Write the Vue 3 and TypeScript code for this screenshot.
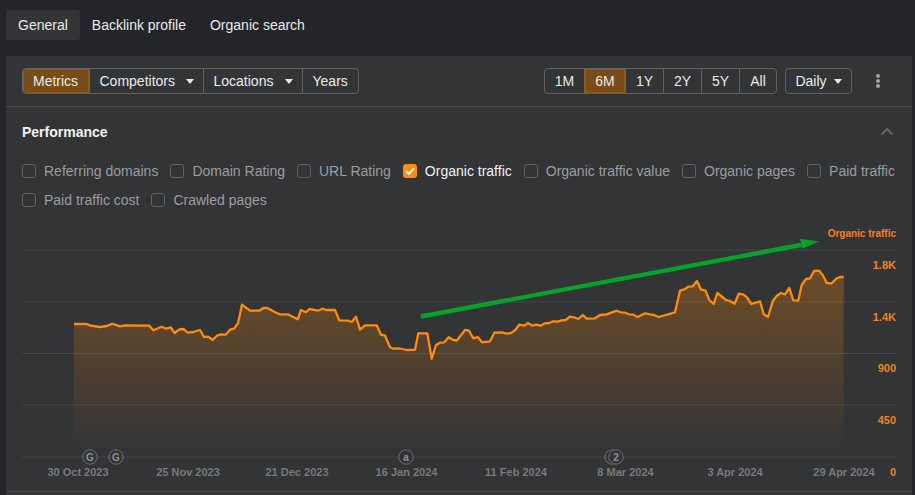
<script setup lang="ts">
const tabs = ['General', 'Backlink profile', 'Organic search']
const left = [
  { label: 'Metrics', active: true, caret: false },
  { label: 'Competitors', active: false, caret: true },
  { label: 'Locations', active: false, caret: true },
  { label: 'Years', active: false, caret: false },
]
const ranges = ['1M', '6M', '1Y', '2Y', '5Y', 'All']
const metrics = [
  'Referring domains', 'Domain Rating', 'URL Rating', 'Organic traffic', 'Organic traffic value',
  'Organic pages', 'Paid traffic', 'Paid traffic cost', 'Crawled pages',
]
const line = `74,324 86.7,324 90.7,325.7 100,327 107,326 112,323.7 120,326.3 125,325.3 149.3,325.7 153.3,330.3 161.7,326.7 166,328.7 170.7,327.3 174.7,333 179.3,329.3 183.3,329 187.7,332.7 193.3,332 200,330 204,337 208.3,336.7 212.7,340 217.3,335.3 221.3,334.3 225.7,334.7 230,329.7 234,328.7 238,323.3 242,304.7 250,310.7 259.3,310.7 263.3,308 267.3,308 275,312.3 280,314.3 288,314.3 297.7,319.3 301,310 306,312.3 309.3,309 318.3,310.7 322.3,308.7 326,310 335,310 339.3,320.3 347.7,320.7 351.7,322 356,316.7 360,329.7 365,325.3 376.7,325.3 381,334.7 385,335.7 390,347.3 393.3,348.7 400,348.5 406.7,350 415,349.7 418.3,333.3 427.3,333.3 431.7,358.7 436,345 440,342.7 444.3,342.3 448.7,337.3 452.7,339.7 456.7,340.7 465,330 469,330.7 473.3,338.3 477.7,337 482,342.3 490,341.3 494.3,332.7 501.7,332.3 506.7,333.7 511,333 515,330.3 519.3,324.7 524,325.7 528,323 532.3,325.7 536,324.7 540.7,325.7 545,323.3 549.3,323 553.3,321.3 557.3,321.7 561.7,320.3 565.7,320 570,316.7 574,317.3 578.3,319 582.7,315 586.7,318.7 595,318.3 600,315 606.7,314.3 616.7,310.7 620.7,312.3 625,312.7 629,314.3 633.3,314.7 637.7,317 645,313.3 650,314.3 654,315 658.7,317 675,312.3 680,290.7 685,289 688.3,286.7 692.7,286.3 697,281 701,289.7 705.3,290.3 709.3,300 713.7,304 717.3,293 726,300 730,301 734.7,303.7 738.7,293.7 742.7,294.3 746.7,297 751.3,304 760,301.3 763.7,314.3 768,317 772.7,301.3 776.7,296 780.7,293 785,294.3 789.3,288 793.3,300.3 798.3,300.7 801.7,285 806,279 810,278.3 814,271 819,270.7 822.7,275 826.7,283 831.7,283.3 836.7,278.3 840,277 843.7,277`
const area = `${line} 843.7,457 74,457`
const gridY = [250, 302, 353.5, 405, 457]
const yLabels = [
  { t: '1.8K', y: 269 },
  { t: '1.4K', y: 321 },
  { t: '900', y: 372 },
  { t: '450', y: 424 },
  { t: '0', y: 476 },
]
const xLabels = [
  { t: '30 Oct 2023', x: 78 },
  { t: '25 Nov 2023', x: 188 },
  { t: '21 Dec 2023', x: 297 },
  { t: '16 Jan 2024', x: 406.5 },
  { t: '11 Feb 2024', x: 516 },
  { t: '8 Mar 2024', x: 625.5 },
  { t: '3 Apr 2024', x: 735 },
  { t: '29 Apr 2024', x: 844 },
]
const markers = [
  { t: 'G', x: 90 },
  { t: 'G', x: 116 },
  { t: 'a', x: 406 },
  { t: '', x: 612 },
  { t: '2', x: 616 },
]
</script>

<template>
  <div class="page">
    <nav class="tabs">
      <span v-for="(t, i) in tabs" :key="t" class="tab" :class="{ on: i === 0 }">{{ t }}</span>
    </nav>
    <section class="panel">
      <header class="toolbar">
        <div class="group main">
          <span v-for="b in left" :key="b.label" class="seg" :class="{ active: b.active }">
            {{ b.label }}<i v-if="b.caret" class="caret"></i>
          </span>
        </div>
        <div class="right">
          <div class="group">
            <span v-for="r in ranges" :key="r" class="seg range" :class="{ active: r === '6M' }">{{ r }}</span>
          </div>
          <span class="daily">Daily<i class="caret small"></i></span>
          <span class="dots"><i></i><i></i><i></i></span>
        </div>
      </header>
      <div class="body">
        <div class="title-row">
          <h2>Performance</h2>
          <svg class="chev" width="14" height="9" viewBox="0 0 14 9">
            <path d="M1.5 7.5 7 2l5.5 5.5" fill="none" stroke="#66686b" stroke-width="2" />
          </svg>
        </div>
        <div class="checks">
          <label v-for="m in metrics" :key="m" class="check" :class="{ sel: m === 'Organic traffic' }">
            <span class="box">
              <svg v-if="m === 'Organic traffic'" width="14" height="14" viewBox="0 0 14 14">
                <path d="M3.2 7.2 6 9.8l4.9-5.4" fill="none" stroke="#fff" stroke-width="2" />
              </svg>
            </span>
            {{ m }}
          </label>
        </div>
      </div>
      <svg class="chart" width="906" height="271" viewBox="6 220 906 271">
        <defs>
          <linearGradient id="fillGrad" gradientUnits="userSpaceOnUse" x1="0" y1="265" x2="0" y2="450">
            <stop offset="0" stop-color="#ff8800" stop-opacity="0.3" />
            <stop offset="1" stop-color="#ff8800" stop-opacity="0" />
          </linearGradient>
        </defs>
        <polygon :points="area" fill="url(#fillGrad)" />
        <line v-for="y in gridY" :key="y" x1="22" x2="896" :y1="y" :y2="y" stroke="#ffffff" stroke-opacity="0.09" />
        <polyline :points="line" fill="none" stroke="#ff8b0d" stroke-width="2.3" stroke-linejoin="round" />
        <path d="M421 316.5 801 245" fill="none" stroke="#07a22c" stroke-width="4.4" />
        <path d="M800 238.8 819 241.6 802 248.8z" fill="#07a22c" />
        <text class="series" x="896" y="237" text-anchor="end">Organic traffic</text>
        <text v-for="l in yLabels" :key="l.t" class="yl" x="896" :y="l.y" text-anchor="end">{{ l.t }}</text>
        <text v-for="l in xLabels" :key="l.t" class="xl" :x="l.x" y="476" text-anchor="middle">{{ l.t }}</text>
        <g v-for="m in markers" :key="m.x">
          <circle :cx="m.x" cy="457" r="7.2" fill="#333436" stroke="#6c6e71" stroke-width="1" />
          <text class="mk" :x="m.x" y="460.5" text-anchor="middle">{{ m.t }}</text>
        </g>
      </svg>
      <div class="foot"></div>
    </section>
  </div>
</template>

<style>
html, body { margin: 0; background: #242528; }
</style>

<style scoped>
.page {
  width: 915px;
  height: 495px;
  overflow: hidden;
  background: #242528;
  font: 14px "Liberation Sans", Arial, sans-serif;
  color: #e9eaeb;
}
.tabs {
  display: flex;
  height: 56px;
  box-sizing: border-box;
  padding: 10px 0 0 6px;
}
.tab {
  height: 30px;
  line-height: 30px;
  padding: 0 12px;
  border-radius: 3px;
}
.tab.on { background: #333436; }
.panel {
  width: 906px;
  height: 439px;
  margin-left: 6px;
  background: #333436;
}
.toolbar {
  height: 51px;
  box-sizing: border-box;
  padding: 12px 32px 0 16px;
  display: flex;
  justify-content: space-between;
  align-items: flex-start;
  border-bottom: 1px solid #47494b;
}
.group {
  display: flex;
  height: 26px;
  box-sizing: border-box;
  border: 1px solid #5f6164;
  border-radius: 4px;
  overflow: hidden;
}
.seg {
  display: flex;
  align-items: center;
  box-sizing: border-box;
  padding: 0 9.5px;
  border-left: 1px solid #5f6164;
  line-height: 24px;
}
.seg:first-child { border-left: 0; padding-left: 10px; }
.seg.active {
  background: #7a4c17;
  box-shadow: inset 0 0 0 1px #8a5a20;
  border-left-color: #8a5a20;
}
.main .seg:nth-child(1) { width: 66px; }
.main .seg:nth-child(2) { width: 114px; }
.main .seg:nth-child(3) { width: 99px; }
.main .seg:nth-child(4) { width: 56px; }
.range { justify-content: center; padding: 0; width: 38px; }
.range:first-child { width: 39px; padding: 0; }
.range:nth-child(2) { width: 41px; }
.range:last-child { width: 37px; }
.caret {
  width: 0;
  height: 0;
  margin-left: auto;
  border-left: 4px solid transparent;
  border-right: 4px solid transparent;
  border-top: 5px solid #e9eaeb;
}
.caret.small { margin-left: 7px; }
.right { display: flex; align-items: flex-start; }
.daily {
  display: flex;
  align-items: center;
  justify-content: center;
  width: 67px;
  height: 26px;
  box-sizing: border-box;
  margin-left: 8px;
  border: 1px solid #5f6164;
  border-radius: 4px;
}
.dots {
  display: flex;
  flex-direction: column;
  gap: 1px;
  margin: 6px 0 0 24px;
}
.dots i {
  width: 4px;
  height: 4px;
  border-radius: 50%;
  background: #a2a4a6;
}
.body { padding: 0 16px; }
.title-row {
  height: 56px;
  box-sizing: border-box;
  padding: 0 2px 7px 0;
  display: flex;
  justify-content: space-between;
  align-items: center;
}
.title-row h2 {
  margin: 0;
  font-size: 14px;
  font-weight: 700;
  color: #f2f2f2;
}
.checks {
  display: flex;
  flex-wrap: wrap;
  align-content: flex-start;
  column-gap: 12px;
  row-gap: 13px;
  width: 880px;
  height: 57px;
}
.check {
  display: flex;
  align-items: center;
  gap: 8px;
  height: 16px;
  color: #9a9da1;
}
.check.sel { color: #f0f0f0; }
.box {
  width: 14px;
  height: 14px;
  box-sizing: border-box;
  border: 1px solid #5f6164;
  border-radius: 3px;
  display: block;
}
.sel .box {
  border: 0;
  background: #ff8b0d;
}
.box svg { display: block; }
.chart { display: block; }
.foot {
  height: 1px;
  background: #47494b;
}
.series {
  font: 700 10px "Liberation Sans", Arial, sans-serif;
  fill: #f47f24;
}
.yl {
  font: 700 11px "Liberation Sans", Arial, sans-serif;
  fill: #ea8520;
}
.xl {
  font: 700 11px "Liberation Sans", Arial, sans-serif;
  fill: #77797c;
}
.mk {
  font: 700 10px "Liberation Sans", Arial, sans-serif;
  fill: #8f9194;
}
</style>
